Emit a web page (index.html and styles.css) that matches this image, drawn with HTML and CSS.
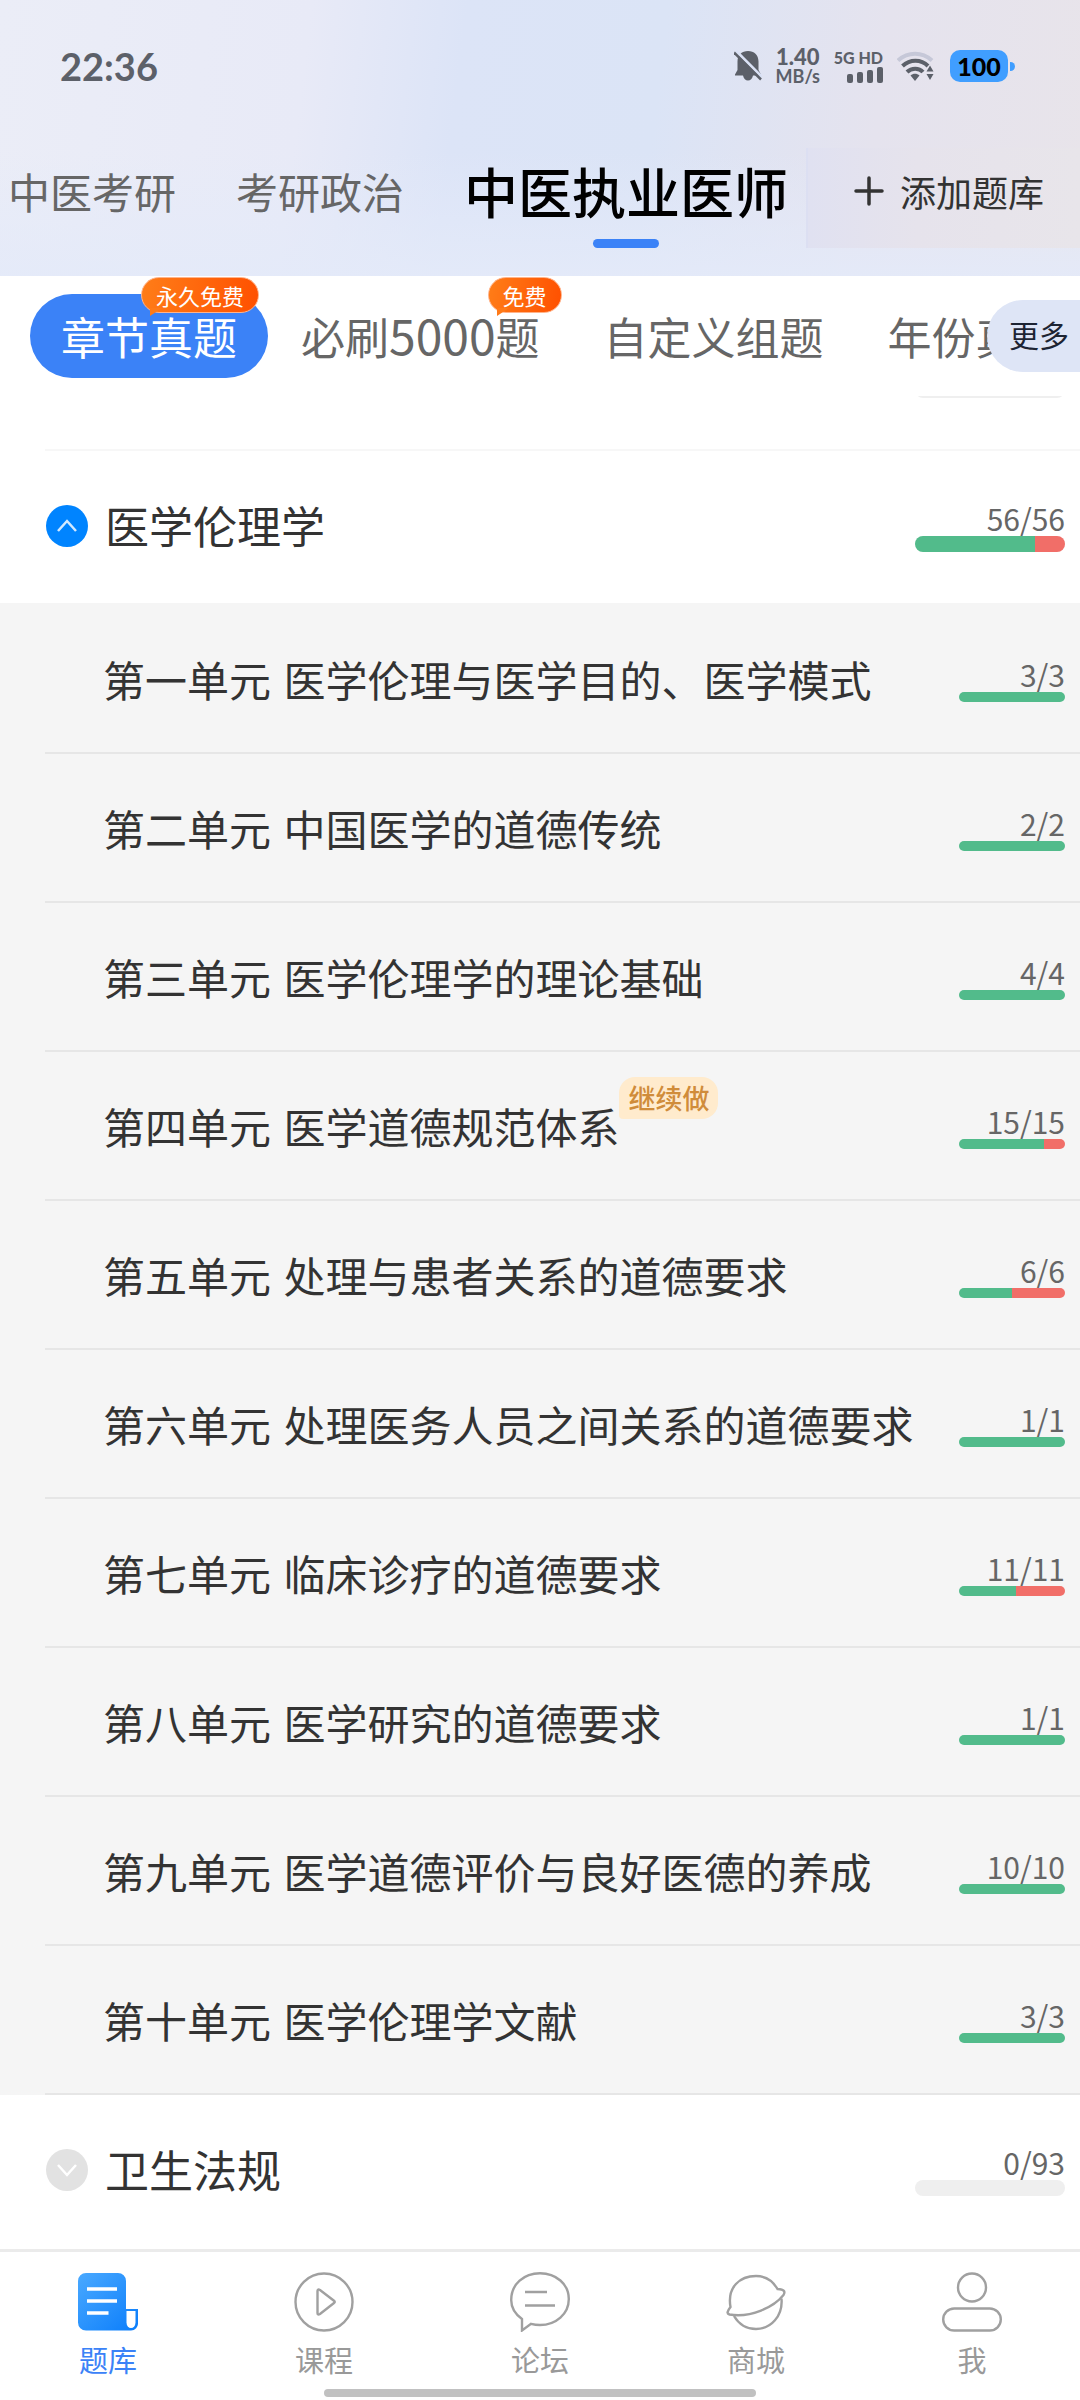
FILE: index.html
```
<!DOCTYPE html>
<html lang="zh-CN">
<head>
    <meta charset="UTF-8">
    <meta name="viewport" content="width=device-width, initial-scale=1.0">
    <title>中医执业医师 - 题库</title>
    <link rel="stylesheet" href="styles.css">
</head>
<body>
    <div class="app">
        <header class="header">
            <div class="status">
                <span class="time">22:36</span>
                <div class="status-icons">
                    <svg class="bell" viewBox="0 0 28 32" width="28" height="32">
                        <path d="M14 1c6 0 10.500 4 10.500 10.500V20l2.500 4.500v1h-8c-.8 3.500-2.500 5-5 5s-4.200-1.500-5-5H1v-1L3.500 20v-8.500C3.500 5 8 1 14 1z" fill="#5c6069"/>
                        <path d="M2 1L28 27" stroke="#dae1f5" stroke-width="3"/>
                        <path d="M0 2.500L27 29.500" stroke="#5c6069" stroke-width="2.500"/>
                    </svg>
                    <div class="speed"><b>1.40</b><span>MB/s</span></div>
                    <div class="signal">
                        <span>5G HD</span>
                        <svg viewBox="0 0 36 16" width="36" height="16" fill="#5c6069">
                            <rect x="0" y="7" width="6" height="9" rx="2"/>
                            <rect x="10" y="5" width="6" height="11" rx="2"/>
                            <rect x="20" y="3" width="6" height="13" rx="2"/>
                            <rect x="30" y="0" width="6" height="16" rx="2"/>
                        </svg>
                    </div>
                    <svg class="wifi" viewBox="0 0 38 30" width="38" height="30" fill="none" stroke="#5c6069" stroke-width="4">
                        <path d="M1 9.500C11 .5 25 .5 35 9.500" stroke="#c6c8d8"/>
                        <path d="M5.500 15C13 8 24 8 31 15"/>
                        <path d="M10 21c4.500-4.500 12-4.500 16 0"/>
                        <path d="M13.500 24.500c2.500-2.500 6.500-2.500 9 0L18 30z" fill="#5c6069" stroke="none"/>
                        <path d="M33 14.500l3.500 6h-7zM33 29l-3.500-6h7z" fill="#5c6069" stroke="none"/>
                    </svg>
                    <div class="battery">100</div>
                </div>
            </div>
            <div class="banks">
                <nav class="bank-tabs">
                    <a href="#">中医考研</a>
                    <a href="#">考研政治</a>
                    <a href="#" class="active">中医执业医师</a>
                </nav>
                <button class="add-bank">
                    <svg viewBox="0 0 30 30" width="30" height="30" stroke="#333" stroke-width="3.500" stroke-linecap="round">
                        <path d="M15 2v26M2 15h26"/>
                    </svg>
                    添加题库
                </button>
            </div>
        </header>

        <div class="modes">
            <button class="mode active">章节真题<span class="badge">永久免费</span></button>
            <button class="mode">必刷<span class="num">5000</span>题<span class="badge">免费</span></button>
            <button class="mode">自定义组题</button>
            <button class="mode">年份真题</button>
            <button class="more">更多</button>
        </div>

        <main class="list">
            <div class="chapter-prev"><div class="bar big"></div></div>

            <button class="chapter">
                <svg viewBox="0 0 42 42" width="42" height="42">
                    <circle cx="21" cy="21" r="21" fill="#0084ff"/>
                    <path d="M12 26l9-10 9 10" fill="none" stroke="#d3e9ff" stroke-width="2.500"/>
                </svg>
                <span class="chapter-name">医学伦理学</span>
                <span class="progress">56/56<span class="bar big"><i class="right" style="width: 80%"></i><i class="wrong" style="width: 20%"></i></span></span>
            </button>

            <div class="units">
                <a href="#" class="unit"><span><span class="no">第一单元</span> 医学伦理与医学目的、医学模式</span><span class="progress">3/3<span class="bar"><i class="right" style="width: 100%"></i></span></span></a>
                <a href="#" class="unit"><span><span class="no">第二单元</span> 中国医学的道德传统</span><span class="progress">2/2<span class="bar"><i class="right" style="width: 100%"></i></span></span></a>
                <a href="#" class="unit"><span><span class="no">第三单元</span> 医学伦理学的理论基础</span><span class="progress">4/4<span class="bar"><i class="right" style="width: 100%"></i></span></span></a>
                <a href="#" class="unit"><span class="current"><span class="no">第四单元</span> 医学道德规范体系<span class="resume">继续做</span></span><span class="progress">15/15<span class="bar"><i class="right" style="width: 80%"></i><i class="wrong" style="width: 20%"></i></span></span></a>
                <a href="#" class="unit"><span><span class="no">第五单元</span> 处理与患者关系的道德要求</span><span class="progress">6/6<span class="bar"><i class="right" style="width: 50%"></i><i class="wrong" style="width: 50%"></i></span></span></a>
                <a href="#" class="unit"><span><span class="no">第六单元</span> 处理医务人员之间关系的道德要求</span><span class="progress">1/1<span class="bar"><i class="right" style="width: 100%"></i></span></span></a>
                <a href="#" class="unit"><span><span class="no">第七单元</span> 临床诊疗的道德要求</span><span class="progress">11/11<span class="bar"><i class="right" style="width: 54%"></i><i class="wrong" style="width: 46%"></i></span></span></a>
                <a href="#" class="unit"><span><span class="no">第八单元</span> 医学研究的道德要求</span><span class="progress">1/1<span class="bar"><i class="right" style="width: 100%"></i></span></span></a>
                <a href="#" class="unit"><span><span class="no">第九单元</span> 医学道德评价与良好医德的养成</span><span class="progress">10/10<span class="bar"><i class="right" style="width: 100%"></i></span></span></a>
                <a href="#" class="unit"><span><span class="no">第十单元</span> 医学伦理学文献</span><span class="progress">3/3<span class="bar"><i class="right" style="width: 100%"></i></span></span></a>
            </div>

            <button class="chapter">
                <svg viewBox="0 0 42 42" width="42" height="42">
                    <circle cx="21" cy="21" r="21" fill="#e2e2e2"/>
                    <path d="M12 16l9 10 9-10" fill="none" stroke="#fff" stroke-width="2.500"/>
                </svg>
                <span class="chapter-name">卫生法规</span>
                <span class="progress">0/93<span class="bar big"></span></span>
            </button>
        </main>

        <nav class="tabbar">
            <a href="#" class="active">
                <svg viewBox="0 0 60 60" width="60" height="60">
                    <defs>
                        <linearGradient id="doc" x1="0" y1="0" x2="1" y2="1">
                            <stop offset="0" stop-color="#4aa9ff"/>
                            <stop offset="1" stop-color="#0a7dfb"/>
                        </linearGradient>
                    </defs>
                    <path d="M8 1h32a8 8 0 0 1 8 8v28h12v14a7 7 0 0 1-7 7.500H8a8 8 0 0 1-8-8V9a8 8 0 0 1 8-8z" fill="url(#doc)"/>
                    <path d="M48.500 39h9v11.500a4.500 5.500 0 0 1-9 0z" fill="#fff"/>
                    <path d="M9 17h30M9 29h30M9 41h21.500" stroke="#fff" stroke-width="3.500"/>
                </svg>
                题库
            </a>
            <a href="#">
                <svg viewBox="0 0 60 60" width="60" height="60">
                    <circle cx="30" cy="30" r="28.500"/>
                    <path d="M23.500 19v22q0 2.500 2.500 1l14-11q1.500-1 0-2.200L26 18q-2.500-1.500-2.500 1z"/>
                </svg>
                课程
            </a>
            <a href="#">
                <svg viewBox="0 0 60 60" width="60" height="60">
                    <path d="M12 58.500V47C5 42 1.200 35 1.200 28 1.200 12 14 1.200 30 1.200S58.800 12 58.800 27 46 53 30 53q-4.500 0-9-1.200z"/>
                    <path d="M15 20h22M15 33.500h30"/>
                </svg>
                论坛
            </a>
            <a href="#">
                <svg viewBox="0 0 60 60" width="60" height="60">
                    <path d="M4.500 35C1 15 14 4 30 4c9.500 0 17 5 21.500 13 7 .5 8 2.500 6 6C48 35 25 46 3.500 42.500c-3-1-2.500-3 1-7.500z"/>
                    <path d="M55.500 26.500C57 44 45 57 30 57c-9 0-17-4.500-22-13"/>
                </svg>
                商城
            </a>
            <a href="#">
                <svg viewBox="0 0 60 60" width="60" height="60">
                    <circle cx="30" cy="15.500" r="14"/>
                    <rect x="1.200" y="36.500" width="57.600" height="22" rx="11"/>
                </svg>
                我
            </a>
            <div class="home-bar"></div>
        </nav>
    </div>
</body>
</html>
```
FILE: styles.css
```
* { box-sizing: border-box; }
body {
    margin: 0;
    font-family: "Noto Sans CJK SC", sans-serif;
    background: #fff;
    color: #333;
}
a { color: inherit; text-decoration: none; }
button {
    border: 0;
    padding: 0;
    background: none;
    color: inherit;
    font: inherit;
    cursor: pointer;
}
.app {
    display: flex;
    flex-direction: column;
    min-height: 100vh;
    overflow: hidden;
}

/* header */
.header {
    background:
        linear-gradient(to top, rgba(228, 234, 249, 0.9), rgba(228, 234, 249, 0) 45%),
        linear-gradient(97deg, #ebedf7 0%, #e8eaf7 28%, #dce4f7 42%, #dbe4f6 60%, #e5e3ee 80%, #e8e4ea 100%);
    padding-bottom: 28px;
}
.status {
    display: flex;
    justify-content: space-between;
    align-items: center;
    height: 132px;
    padding: 0 72px 0 60px;
    font-family: Lato, sans-serif;
    color: #5c6069;
}
.time { font-size: 38px; font-weight: 700; }
.status-icons { display: flex; align-items: center; }
.bell { margin-right: 12px; }
.speed {
    display: flex;
    flex-direction: column;
    width: 48px;
    font-size: 18px;
    font-weight: 700;
    line-height: 18px;
    text-align: center;
}
.speed b { font-size: 22px; line-height: 20px; }
.signal {
    display: flex;
    flex-direction: column;
    align-items: flex-end;
    margin: 0 14px 0 12px;
    font-size: 16px;
    font-weight: 900;
    line-height: 18px;
}
.battery {
    position: relative;
    width: 58px;
    margin-left: 15px;
    border-radius: 10px;
    background: #409eff;
    color: #000;
    font-size: 25px;
    font-weight: 900;
    line-height: 32px;
    text-align: center;
}
.battery::after {
    content: "";
    position: absolute;
    top: 12px;
    right: -7px;
    width: 5px;
    height: 9px;
    border-radius: 0 5px 5px 0;
    background: #409eff;
}
.banks {
    display: flex;
    justify-content: space-between;
    margin-top: 16px;
}
.bank-tabs {
    display: flex;
    align-items: center;
    gap: 60px;
    padding-left: 8px;
    height: 100px;
    font-size: 42px;
    line-height: 86px;
    color: #666;
    white-space: nowrap;
}
.bank-tabs a { padding-bottom: 14px; }
.bank-tabs .active {
    position: relative;
    color: #000;
    font-size: 54px;
    font-weight: 500;
}
.bank-tabs .active::after {
    content: "";
    position: absolute;
    bottom: 0;
    left: 50%;
    width: 66px;
    height: 9px;
    margin-left: -33px;
    border-radius: 5px;
    background: #3b82f7;
}
.add-bank {
    display: flex;
    align-items: center;
    gap: 16px;
    padding: 0 36px 14px 46px;
    border-left: 2px solid #dcdff2;
    background: linear-gradient(90deg, #e0e1f1, #e6e3ec 40%, #e8e5ea);
    font-size: 36px;
    white-space: nowrap;
}

/* mode tabs */
.modes {
    position: relative;
    display: flex;
    gap: 2px;
    height: 120px;
    padding: 18px 0 18px 30px;
    overflow: hidden;
}
.mode {
    position: relative;
    flex: none;
    padding: 0 31px;
    border-radius: 42px;
    font-size: 44px;
    line-height: 80px;
    color: #666;
}
.mode.active { background: #3b82f7; color: #fff; }
.num { font-size: 48px; line-height: 1; }
.badge {
    position: absolute;
    top: -17px;
    right: 9px;
    padding: 0 14px;
    border: 1px solid #ffb38a;
    border-radius: 18px;
    background: linear-gradient(100deg, #ff7d18, #ff5000);
    color: #fff;
    font-size: 22px;
    line-height: 34px;
}
.badge::after {
    content: "";
    position: absolute;
    bottom: -4px;
    left: 8px;
    border-top: 8px solid #ff7a18;
    border-right: 12px solid transparent;
}
.more {
    position: absolute;
    top: 24px;
    right: 0;
    height: 72px;
    padding: 0 11px 4px 22px;
    border-radius: 36px 0 0 36px;
    background: #dee5f6;
    color: #1d2433;
    font-size: 30px;
}

/* question list */
.list { overflow: hidden; }
.chapter-prev {
    display: flex;
    justify-content: flex-end;
    height: 55px;
    margin-left: 45px;
    padding-right: 15px;
    border-bottom: 2px solid #f7f7f7;
}
.chapter-prev .bar { margin-top: -14px; }
.chapter {
    display: flex;
    align-items: center;
    width: 100%;
    height: 152px;
    padding: 0 15px 2px 46px;
}
.chapter-name {
    flex: 1;
    padding: 0 0 2px 17px;
    font-size: 44px;
    text-align: left;
}
.progress {
    display: flex;
    flex-direction: column;
    align-items: flex-end;
    color: #666;
    font-size: 30px;
    line-height: 36px;
}
.bar {
    display: flex;
    width: 106px;
    height: 10px;
    border-radius: 8px;
    background: #efefef;
    overflow: hidden;
}
.bar.big { width: 150px; height: 16px; }
.right { background: #52bb8b; }
.wrong { background: #f16e68; }
.units { padding: 2px 0 0 45px; background: #f5f5f5; }
.unit {
    display: flex;
    justify-content: space-between;
    align-items: center;
    height: 149px;
    padding: 0 15px 0 58px;
    border-bottom: 2px solid #e6e6e6;
    font-size: 42px;
    white-space: nowrap;
}
.no { margin-right: 3px; }
.current { position: relative; }
.resume {
    position: absolute;
    top: -18px;
    left: 100%;
    padding: 0 9px;
    border-radius: 16px 16px 16px 4px;
    background: #ffebcd;
    color: #d08c3a;
    font-size: 27px;
    font-weight: 500;
    line-height: 42px;
}

/* bottom tab bar */
.tabbar {
    position: relative;
    display: flex;
    height: 151px;
    margin-top: auto;
    border-top: 3px solid #ebebeb;
    padding-top: 20px;
}
.tabbar a {
    flex: 1;
    display: flex;
    flex-direction: column;
    align-items: center;
    gap: 7px;
    color: #999;
    font-size: 29px;
    line-height: 40px;
}
.tabbar .active { color: #3b82f7; }
.tabbar a:not(.active) svg {
    fill: none;
    stroke: #a0a0a0;
    stroke-width: 2.4px;
}
.home-bar {
    position: absolute;
    bottom: 3px;
    left: 30%;
    width: 40%;
    height: 8px;
    border-radius: 4px;
    background: #c1c1c1;
}
```
